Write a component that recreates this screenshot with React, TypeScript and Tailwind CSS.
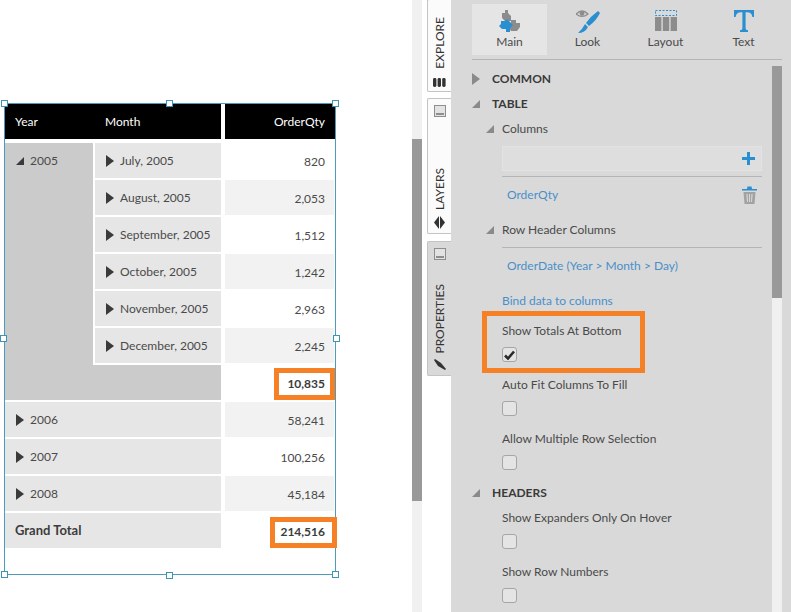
import type { ReactNode } from 'react';

const FONT = "font-['Lato','Liberation_Sans',sans-serif]";

function Collapsed({ className = 'fill-[#3a3a3a]' }: { className?: string }) {
  return (
    <svg width="8" height="12" viewBox="0 0 8 12" className={`shrink-0 ${className}`}>
      <polygon points="0,0 8,6 0,12" />
    </svg>
  );
}

function Expanded({ className = 'fill-[#3a3a3a]' }: { className?: string }) {
  return (
    <svg width="8" height="8" viewBox="0 0 8 8" className={`shrink-0 ${className}`}>
      <polygon points="8,0 8,8 0,8" />
    </svg>
  );
}

const months = [
  { name: 'July, 2005', qty: '820' },
  { name: 'August, 2005', qty: '2,053' },
  { name: 'September, 2005', qty: '1,512' },
  { name: 'October, 2005', qty: '1,242' },
  { name: 'November, 2005', qty: '2,963' },
  { name: 'December, 2005', qty: '2,245' },
];

const years = [
  { name: '2006', qty: '58,241', shade: true },
  { name: '2007', qty: '100,256', shade: false },
  { name: '2008', qty: '45,184', shade: true },
];

function Value({ children, shade }: { children: ReactNode; shade?: boolean }) {
  return (
    <div className={`flex h-[35px] items-center justify-end pt-[2px] pr-[9px] mr-[1px] ${shade ? 'bg-[#f2f2f2]' : 'bg-white'}`}>
      {children}
    </div>
  );
}

function Handle({ className }: { className: string }) {
  return <div className={`absolute h-[7px] w-[7px] border border-[#3f93b5] bg-white ${className}`} />;
}

function DataTable() {
  return (
    <div className="relative ml-[4px] mt-[103px] h-[472px] w-[332px] border border-[#4b9bbd] text-[12px] text-[#4a4a4a]">
      <div className="flex h-[35px] text-white">
        <div className="flex w-[216px] items-center bg-black">
          <span className="w-[100px] pl-[10px]">Year</span>
          <span>Month</span>
        </div>
        <div className="ml-[4px] flex w-[110px] items-center justify-end bg-black pr-[10px]">OrderQty</div>
      </div>
      <div className="mt-[4px] grid grid-cols-[88px_2px_126px_4px_110px] auto-rows-[35px] gap-y-[2px]">
        <div className="col-start-1 row-start-1 row-span-7 bg-[#cbcbcb]">
          <div className="flex h-[35px] items-center pl-[11px]">
            <Expanded />
            <span className="ml-[6px]">2005</span>
          </div>
        </div>
        {months.map((m, i) => (
          <div key={m.name} className="contents">
            <div className="col-start-3 flex items-center bg-[#e6e6e6] pl-[11px]" style={{ gridRowStart: i + 1 }}>
              <Collapsed />
              <span className="ml-[6px]">{m.name}</span>
            </div>
            <div className="col-start-5" style={{ gridRowStart: i + 1 }}>
              <Value shade={i % 2 === 1}>{m.qty}</Value>
            </div>
          </div>
        ))}
        <div className="col-start-2 col-span-2 row-start-7 bg-[#cbcbcb]" />
        <div className="col-start-5 row-start-7">
          <Value>
            <b className="text-[#3c3c3c]">10,835</b>
          </Value>
        </div>
        {years.map((y, i) => (
          <div key={y.name} className="contents">
            <div className="col-start-1 col-span-3 flex items-center bg-[#e6e6e6] pl-[11px]" style={{ gridRowStart: i + 8 }}>
              <Collapsed />
              <span className="ml-[6px]">{y.name}</span>
            </div>
            <div className="col-start-5" style={{ gridRowStart: i + 8 }}>
              <Value shade={y.shade}>{y.qty}</Value>
            </div>
          </div>
        ))}
        <div className="col-start-1 col-span-3 row-start-11 flex items-center bg-[#e6e6e6] pl-[10px] text-[13px] font-bold text-[#3c3c3c]">
          Grand Total
        </div>
        <div className="col-start-5 row-start-11">
          <Value>
            <b className="text-[#3c3c3c]">214,516</b>
          </Value>
        </div>
      </div>

      <div className="absolute left-[269px] top-[264px] h-[32px] w-[61px] border-[5px] border-[#f58025]" />
      <div className="absolute left-[265px] top-[413px] h-[31px] w-[67px] border-[5px] border-[#f58025]" />

      <Handle className="left-[-4px] top-[-4px]" />
      <Handle className="left-[161px] top-[-4px]" />
      <Handle className="right-[-4px] top-[-4px]" />
      <Handle className="left-[-5px] top-[231px]" />
      <Handle className="right-[-5px] top-[231px]" />
      <Handle className="bottom-[-4px] left-[-4px]" />
      <Handle className="bottom-[-5px] left-[161px]" />
      <Handle className="bottom-[-4px] right-[-4px]" />
    </div>
  );
}

function MinimizeIcon() {
  return (
    <div className="flex h-[12px] w-[12px] items-end border border-[#8e8e8e] bg-[#e3e3e3] p-[1px]">
      <div className="h-[2px] w-full bg-[#8e8e8e]" />
    </div>
  );
}

function SideTab({ label, icon, top, active, h }: { label: string; icon: ReactNode; top?: ReactNode; active?: boolean; h: string }) {
  return (
    <div
      className={`flex ${h} w-[24px] flex-col items-center rounded-l-[2px] border-y border-l border-[#c4c4c4] ${
        active ? 'w-[25px] bg-[#d9d9d9]' : 'bg-[#fbfbfb]'
      }`}
    >
      {top}
      <div className="flex-1" />
      <span className="rotate-180 text-[12px] leading-[14px] text-[#333] [writing-mode:vertical-rl]">{label}</span>
      {icon}
    </div>
  );
}

function SideTabs() {
  return (
    <div className="flex w-[29px] flex-col bg-white pl-[5px]">
      <SideTab
        h="h-[93px] -mt-px"
        label="EXPLORE"
        icon={
          <svg width="13" height="9" viewBox="0 0 13 9" className="mb-[4px] mt-[9px] fill-[#333]">
            <rect x="0" y="0" width="3.4" height="9" rx="1.4" />
            <rect x="4.6" y="0" width="3.4" height="9" rx="1.4" />
            <rect x="9.2" y="0" width="3.4" height="9" rx="1.4" />
          </svg>
        }
      />
      <div className="h-[6px]" />
      <SideTab
        h="h-[136px]"
        label="LAYERS"
        top={
          <div className="mt-[6px]">
            <MinimizeIcon />
          </div>
        }
        icon={
          <svg width="11" height="13" viewBox="0 0 11 13" className="mb-[4px] mt-[6px] fill-[#333]">
            <polygon points="5,0 5,13 0,6.5" />
            <polygon points="6,0 11,6.5 6,13" />
          </svg>
        }
      />
      <div className="h-[7px]" />
      <SideTab
        h="h-[135px]"
        active
        label="PROPERTIES"
        top={
          <div className="mt-[6px]">
            <MinimizeIcon />
          </div>
        }
        icon={
          <svg width="12" height="11" viewBox="0 0 12 11" className="mb-[5px] mt-[5px] fill-[#333]">
            <polygon points="0,1 1,0 7,4 12,10 11,11 4,7" />
          </svg>
        }
      />
    </div>
  );
}

function ToolButton({ label, icon, selected }: { label: string; icon: ReactNode; selected?: boolean }) {
  return (
    <div className={`flex h-[51px] w-[75px] flex-col items-center ${selected ? 'bg-[#e5e5e5]' : ''}`}>
      <div className="flex h-[30px] items-center pt-[3px]">{icon}</div>
      <span className="text-[12px] leading-[15px] text-[#4a4a4a]">{label}</span>
    </div>
  );
}

function Toolbar() {
  return (
    <div className="ml-[21px] mr-[9px] flex h-[60px] items-start gap-[3px] border-b border-[#b4b4b4] pt-[4px]">
      <ToolButton
        selected
        label="Main"
        icon={
          <svg width="24" height="24" viewBox="0 0 24 24">
            <path d="M4 4 L7 4 L7 1 L10 1 L10 4 L13 7 L13 12 L7 12 L4 9 Z" fill="#8c8c8c" />
            <path d="M13 11 L18 11 L18 14 L22 14 L22 18 L19 22 L13 22 L11 19 L13 16 Z" fill="#8c8c8c" />
            <path d="M3 12 L7 12 L9 10 L12 13 L15 16 L12 19 L12 23 L8 23 L8 20 L4 20 L1 17 L3 15 Z" fill="#2a8fd0" />
          </svg>
        }
      />
      <ToolButton
        label="Look"
        icon={
          <svg width="24" height="26" viewBox="0 0 24 26">
            <path d="M0 6 Q6 0 12 6 Q6 11 0 6 Z" fill="none" stroke="#8c8c8c" strokeWidth="1.2" />
            <circle cx="6" cy="5.5" r="2.4" fill="#8c8c8c" />
            <path d="M22 3 L24 5 Q20 13 13 18 L10 15 Q15 8 22 3 Z" fill="#2a8fd0" />
            <path d="M9 16 L12 19 Q9 25 2 25 Q6 22 9 16 Z" fill="#2a8fd0" />
          </svg>
        }
      />
      <ToolButton
        label="Layout"
        icon={
          <svg width="22" height="22" viewBox="0 0 22 22">
            <rect x="0.5" y="0.5" width="21" height="5" fill="none" stroke="#2a8fd0" strokeWidth="1" strokeDasharray="2 1.5" />
            <rect x="0" y="7" width="6.4" height="14" fill="#8c8c8c" />
            <rect x="7.8" y="7" width="6.4" height="14" fill="#8c8c8c" />
            <rect x="15.6" y="7" width="6.4" height="14" fill="#8c8c8c" />
          </svg>
        }
      />
      <ToolButton
        label="Text"
        icon={
          <svg width="20" height="22" viewBox="0 0 20 22" className="fill-[#2a8fd0]">
            <path d="M0 0 H20 V7 H18.4 Q18 2.4 13 2.2 H11.6 V18.4 Q11.6 20 14 20.2 V22 H6 V20.2 Q8.4 20 8.4 18.4 V2.2 H7 Q2 2.4 1.6 7 H0 Z" />
          </svg>
        }
      />
    </div>
  );
}

function Heading({ label, open, className = '' }: { label: string; open?: boolean; className?: string }) {
  return (
    <div className={`flex h-[25px] items-center text-[12px] font-bold text-[#3a3a3a] ${className}`}>
      <div className="flex w-[20px] justify-start">
        {open ? <Expanded className="fill-[#8a8a8a]" /> : <Collapsed className="fill-[#8a8a8a]" />}
      </div>
      {label}
    </div>
  );
}

function SubHeading({ label, className = '' }: { label: string; className?: string }) {
  return (
    <div className={`flex h-[25px] items-center text-[12px] text-[#4a4a4a] ${className}`}>
      <div className="ml-[14px] flex w-[16px]">
        <Expanded className="fill-[#8a8a8a]" />
      </div>
      {label}
    </div>
  );
}

function CheckField({ label, checked, className = '' }: { label: string; checked?: boolean; className?: string }) {
  return (
    <div className={`pl-[30px] ${className}`}>
      <div className="flex h-[22px] items-center text-[12px] text-[#4a4a4a]">{label}</div>
      <div className="mt-[5px] flex h-[15px] w-[15px] items-center justify-center rounded-[3px] border border-[#a6a6a6] bg-[#e4e4e4]">
        {checked && (
          <svg width="11" height="10" viewBox="0 0 11 10">
            <path d="M1 5.5 L4 8.5 L10 1.5" fill="none" stroke="#2b2b2b" strokeWidth="2.6" />
          </svg>
        )}
      </div>
    </div>
  );
}

function LinkRow({ label, children, className = '' }: { label: string; children?: ReactNode; className?: string }) {
  return (
    <div className={`flex items-center justify-between text-[12px] text-[#4a8fc9] ${className}`}>
      <span>{label}</span>
      {children}
    </div>
  );
}

function PropertiesPanel() {
  return (
    <div className="relative h-full w-[340px] bg-[#d9d9d9]">
      <Toolbar />
      <div className="mt-[6px] flex">
        <div className="ml-[21px] w-[300px]">
          <Heading label="COMMON" />
          <Heading label="TABLE" open />
          <SubHeading label="Columns" />
          <div className="ml-[30px] mr-[10px] border-b border-[#b4b4b4] pb-[5px] pt-[5px]">
            <div className="flex h-[25px] items-center justify-end border border-[#e2e2e2] bg-[#dedede] pr-[6px]">
              <svg width="13" height="13" viewBox="0 0 13 13">
                <path d="M6.5 0 V13 M0 6.5 H13" stroke="#2a8fd0" strokeWidth="3" />
              </svg>
            </div>
          </div>
          <LinkRow label="OrderQty" className="ml-[35px] mr-[15px] h-[36px]">
            <svg width="15" height="18" viewBox="0 0 15 18">
              <path d="M0 3 H5 L5.5 0.5 H9.5 L10 3 H15 V4.6 H0 Z" fill="#2a8fd0" />
              <path d="M1.5 6 H13.5 L12.5 18 H2.5 Z M4.4 8 L5 16 H6 L5.6 8 Z M7 8 V16 H8 V8 Z M9.4 8 L9 16 H10 L10.6 8 Z" fill="#a2a2a2" fillRule="evenodd" />
            </svg>
          </LinkRow>
          <SubHeading label="Row Header Columns" className="mt-[4px]" />
          <div className="ml-[30px] mr-[10px] mt-[5px] h-px bg-[#b4b4b4]" />
          <LinkRow label="OrderDate (Year > Month > Day)" className="ml-[35px] h-[35px]" />
          <LinkRow label="Bind data to columns" className="ml-[30px] mt-[5px] h-[25px]" />
          <CheckField label="Show Totals At Bottom" checked className="mt-[7px]" />
          <CheckField label="Auto Fit Columns To Fill" className="mt-[12px]" />
          <CheckField label="Allow Multiple Row Selection" className="mt-[12px]" />
          <Heading label="HEADERS" open className="mt-[10px]" />
          <CheckField label="Show Expanders Only On Hover" className="mt-[2px]" />
          <CheckField label="Show Row Numbers" className="mt-[12px]" />
        </div>
      </div>
      <div className="absolute bottom-0 left-[321px] top-[66px] w-[10px] bg-[#f0f0f0]">
        <div className="h-[232px] bg-[#999999]" />
      </div>
      <div className="absolute left-[31px] top-[311px] h-[62px] w-[163px] border-[5px] border-[#f58025]" />
    </div>
  );
}

export default function App() {
  return (
    <div className={`flex h-[612px] w-[791px] overflow-hidden bg-white ${FONT}`}>
      <div className="h-full w-[412px]">
        <DataTable />
      </div>
      <div className="flex h-full w-[10px] flex-col bg-[#f0f0f0]">
        <div className="mt-[139px] h-[362px] bg-[#999999]" />
      </div>
      <SideTabs />
      <PropertiesPanel />
    </div>
  );
}
